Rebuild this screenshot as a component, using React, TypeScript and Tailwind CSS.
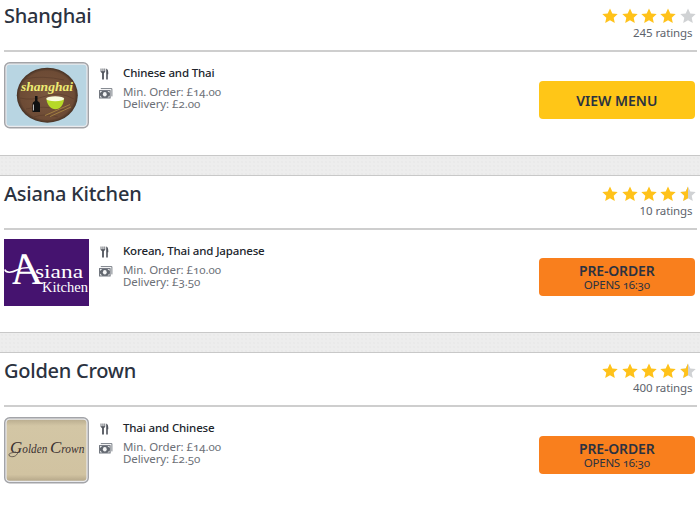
interface Restaurant {
  id: string;
  name: string;
  cuisines: string;
  minOrder: string;
  delivery: string;
  rating: number;
  ratings: number;
  opens?: string;
}

const restaurants: Restaurant[] = [
  {
    id: "shanghai",
    name: "Shanghai",
    cuisines: "Chinese and Thai",
    minOrder: "£14.00",
    delivery: "£2.00",
    rating: 4,
    ratings: 245,
  },
  {
    id: "asiana",
    name: "Asiana Kitchen",
    cuisines: "Korean, Thai and Japanese",
    minOrder: "£10.00",
    delivery: "£3.50",
    rating: 4.5,
    ratings: 10,
    opens: "16:30",
  },
  {
    id: "golden",
    name: "Golden Crown",
    cuisines: "Thai and Chinese",
    minOrder: "£14.00",
    delivery: "£2.50",
    rating: 4.5,
    ratings: 400,
    opens: "16:30",
  },
];

const STAR = "M8 0.4 L10.3 5.4 L15.7 6 L11.7 9.7 L12.8 15 L8 12.3 L3.2 15 L4.3 9.7 L0.3 6 L5.7 5.4 Z";

export default function App() {
  return (
    <main className="h-[508px] w-[700px] overflow-hidden bg-white font-['Noto_Sans','Open_Sans',sans-serif] oldstyle-nums text-[#2b3240]">
      {restaurants.map((r, i) => (
        <div key={r.id}>
          {i > 0 && (
            <div className="h-[21px] border-y border-[#c8c8c8] bg-[#ededed] bg-[radial-gradient(#e7e7e7_0.6px,transparent_0.9px)] bg-[size:4px_4px]" />
          )}
          <RestaurantCard restaurant={r} first={i === 0} />
        </div>
      ))}
    </main>
  );
}

function RestaurantCard({ restaurant: r, first }: { restaurant: Restaurant; first: boolean }) {
  return (
    <section className={first ? "h-[155px]" : "h-[156px]"}>
      <header
        className={[
          "mr-[3px] ml-1 flex justify-between border-b-2 border-[#cecece]",
          first ? "h-[52px] pt-[2px]" : "h-[54px] pt-1",
        ].join(" ")}
      >
        <h2 className="text-[20px] leading-7 font-medium tracking-[-0.25px]">{r.name}</h2>
        <div className="flex flex-col items-end pt-[6px] pr-[1.5px]">
          <Stars value={r.rating} />
          <p className="mt-px mr-[3px] text-[11.5px] leading-4 tracking-[-0.1px] lining-nums text-[#5d636c]">
            {r.ratings} ratings
          </p>
        </div>
      </header>
      <div className={first || r.id === "golden" ? "flex pt-[10px] pl-1" : "flex pt-[9px] pl-1"}>
        <Logo id={r.id} />
        <div className={r.id === "asiana" ? "ml-[10px] flex w-6 flex-col pt-[7px]" : "ml-[10px] flex w-6 flex-col pt-[6px]"}>
          <CutleryIcon />
          <CashIcon />
        </div>
        <div className={r.id === "asiana" ? "flex-1 pt-1 text-[11.5px]" : "flex-1 pt-[3px] text-[11.5px]"}>
          <p className="leading-4 font-medium tracking-[-0.15px] text-[#20242b]">{r.cuisines}</p>
          <div className="mt-[5px] leading-[12px] tracking-[-0.08px] text-[#6c7077]">
            <p>Min. Order: {r.minOrder}</p>
            <p>Delivery: {r.delivery}</p>
          </div>
        </div>
        {r.opens ? (
          <button className="mt-[19px] mr-[5px] flex h-[38px] w-[156.5px] flex-col items-center rounded bg-[#f97f1d] pt-[5px]">
            <span className="text-[14px] leading-4 font-semibold tracking-[-0.15px]">PRE-ORDER</span>
            <span className="text-[11.5px] leading-[12px] tracking-[-0.25px]">OPENS {r.opens}</span>
          </button>
        ) : (
          <button className="mt-[19px] mr-[5px] flex h-[38px] w-[156.5px] items-center justify-center rounded bg-[#ffc617] text-[14px] font-semibold">
            VIEW MENU
          </button>
        )}
      </div>
    </section>
  );
}

function Stars({ value }: { value: number }) {
  return (
    <div className="flex gap-[3.3px]">
      {[0, 1, 2, 3, 4].map((i) => (
        <svg key={i} className="h-4 w-4" viewBox="0 0 16 16">
          <path d={STAR} fill={value >= i + 1 ? "#ffc21a" : "#d0d2d4"} />
          {value === i + 0.5 && <path d="M8 0.4 V12.3 L3.2 15 L4.3 9.7 L0.3 6 L5.7 5.4 Z" fill="#ffc21a" />}
        </svg>
      ))}
    </div>
  );
}

function CutleryIcon() {
  return (
    <svg className="h-3 w-[13px]" viewBox="0 0 13 12">
      <path d="M1.6 0.5 V3.8 L3.1 5.2 V11.5 H4.9 V5.2 L6.2 3.8 V0.5 H5.4 V3.2 H4.4 V0.5 H3.5 V3.2 H2.4 V0.5 Z" fill="#50545c" />
      <path d="M7.2 0.5 C8.9 1 9.4 3 9.3 6.3 H8.8 V11.5 H7.2 Z" fill="#50545c" />
    </svg>
  );
}

function CashIcon() {
  return (
    <svg className="mt-[8px] h-[11px] w-[14px]" viewBox="0 0 14 11">
      <path d="M1.8 0.6 H12.9 V8.4" fill="none" stroke="#7b8188" />
      <rect x="0.5" y="2.6" width="10.6" height="7.4" fill="#62676f" stroke="#737880" />
      <path d="M1 3.1 H3.2 L1 5 Z M10.6 3.1 H8.4 L10.6 5 Z M1 9.5 H3.2 L1 7.6 Z M10.6 9.5 H8.4 L10.6 7.6 Z" fill="#e6e8ea" />
      <ellipse cx="5.8" cy="6.3" rx="1.9" ry="2.2" fill="#f4f5f6" />
    </svg>
  );
}

function Logo({ id }: { id: string }) {
  if (id === "asiana") {
    return (
      <svg className="h-[67px] w-[85px]" viewBox="0 0 85 67">
        <rect width="85" height="67" fill="#45136f" />
        <text x="8" y="45" fill="#fff" fontFamily="Liberation Serif, serif" fontStyle="italic" fontSize="45" textLength="28" lengthAdjust="spacingAndGlyphs" transform="translate(13 0) skewX(16) translate(-13 0) translate(-10 0)">A</text>
        <path d="M0.8 30.5 C2 34.5 8 33.5 13 31 C17 29 21 28.5 25 28.5" fill="none" stroke="#fff" strokeWidth="1.6" />
        <text x="31" y="39" fill="#fff" fontFamily="Liberation Serif, serif" fontSize="18" textLength="48" lengthAdjust="spacingAndGlyphs">siana</text>
        <text x="38" y="53" fill="#fff" fontFamily="Liberation Serif, serif" fontSize="15" textLength="46" lengthAdjust="spacingAndGlyphs">Kitchen</text>
      </svg>
    );
  }

  const shanghai = id === "shanghai";
  return (
    <svg className="h-[67px] w-[85px]" viewBox="0 0 85 67">
      <defs>
        <linearGradient id="paper" x1="0" y1="0" x2="0" y2="1">
          <stop offset="0" stopColor="#bbae90" />
          <stop offset="0.1" stopColor="#d3c6a5" />
          <stop offset="0.9" stopColor="#d1c3a1" />
          <stop offset="1" stopColor="#b6a88a" />
        </linearGradient>
        <radialGradient id="wood">
          <stop offset="0" stopColor="#7a573e" />
          <stop offset="0.88" stopColor="#6d4b35" />
          <stop offset="1" stopColor="#453124" />
        </radialGradient>
      </defs>
      <rect x="0.7" y="0.7" width="83.6" height="65" rx="5" fill="#e9eaed" stroke="#a3a4a8" strokeWidth="1.4" />
      <rect x="2.6" y="2.8" width="79.8" height="61" rx="3" fill={shanghai ? "#b8d5e2" : "url(#paper)"} />
      {shanghai ? (
        <>
          <ellipse cx="43.3" cy="33.2" rx="30.5" ry="27.5" fill="url(#wood)" />
          <path d="M20 17 Q38 13 60 18 M16 36 Q28 39 42 34 T70 37 M22 47 Q38 43 61 48 M30 55 Q40 51 54 55" fill="none" stroke="#5b3e2c" strokeWidth="0.7" />
          <text x="17" y="29" fill="#edeb73" fontFamily="Liberation Serif, serif" fontStyle="italic" fontWeight="700" fontSize="13.5" textLength="52" lengthAdjust="spacingAndGlyphs">shanghai</text>
          <path d="M31 34 H33.5 V39 Q36 40 36 42 V50 H28.5 V42 Q28.5 40 31 39 Z" fill="#111" />
          <path d="M29.5 42.5 V48.5" stroke="#e6e6e6" strokeWidth="0.8" />
          <path d="M42.5 37 C43 43 46.5 47 51.5 47.3 C56.5 47 59.5 43 60 37 Z" fill="#b6d927" />
          <ellipse cx="51.2" cy="36.8" rx="9" ry="2.5" fill="#f8fbdc" />
          <path d="M41 53.5 L66 42.5 M46 54.5 L67 45" stroke="#ad8b44" strokeWidth="0.8" />
        </>
      ) : (
        <>
          <text y="36" fill="#3b3131" fontFamily="Z003, 'URW Chancery L', 'Liberation Serif', cursive" fontStyle="italic">
            <tspan x="6" fontSize="17">G</tspan>
            <tspan fontSize="13" textLength="25" lengthAdjust="spacingAndGlyphs">olden</tspan>
            <tspan x="46" fontSize="17">C</tspan>
            <tspan fontSize="13" textLength="23" lengthAdjust="spacingAndGlyphs">rown</tspan>
          </text>
          {/* swash under the G */}
          <path d="M14 35 C13 39.5 8 41 5 38.5 C4 36.5 8 35.5 12 35" fill="none" stroke="#3b3131" strokeWidth="0.7" />
        </>
      )}
    </svg>
  );
}
